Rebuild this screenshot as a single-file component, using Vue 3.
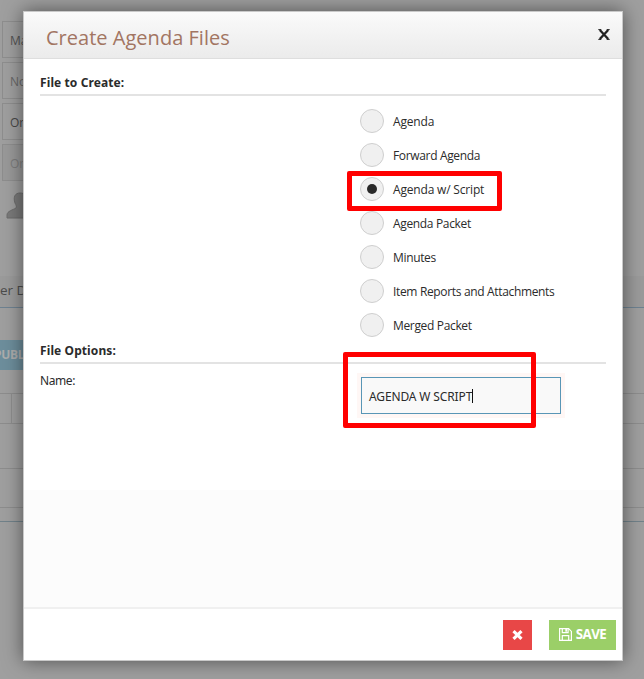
<script setup>
import { ref } from 'vue'

const fields = [
  { text: 'Ma', tone: '' },
  { text: 'No', tone: 'mid' },
  { text: 'Or', tone: 'dark' },
  { text: 'Or', tone: 'off' },
]
const files = [
  'Agenda',
  'Forward Agenda',
  'Agenda w/ Script',
  'Agenda Packet',
  'Minutes',
  'Item Reports and Attachments',
  'Merged Packet',
]
const selected = ref('Agenda w/ Script')
const name = ref('AGENDA W SCRIPT')
</script>

<template>
  <div class="screen">
    <div class="page">
      <div class="fields">
        <div v-for="(f, i) in fields" :key="i" class="field" :class="f.tone">{{ f.text }}</div>
      </div>
      <svg class="person" width="34" height="28" viewBox="0 0 34 28">
        <path d="M1 26v-3c0-4 6-5 9-7 1-1 0-3-1-5C7 5 9 1 14 1s8 3 7 9c0 3-2 5-1 6 3 2 10 3 10 7v3z" fill="#7a7a7a" stroke="#6c6c6c" />
      </svg>
      <div class="tabs">er D</div>
      <div class="actions"><span class="publish">PUBL</span></div>
      <div class="table">
        <div class="head"><span class="cell"></span></div>
        <div class="row"></div>
        <div class="row last"></div>
        <div class="end"></div>
      </div>
    </div>

    <section class="modal">
      <header class="top">
        <h1>Create Agenda Files</h1>
        <svg class="close" width="12" height="11" viewBox="0 0 12 11">
          <path d="M1.800 1l8.400 9M10.200 1L1.800 10" stroke="#222" stroke-width="2.300" />
          <path d="M.3.600h3M8.700.600h3M.3 10.400h3M8.700 10.400h3" stroke="#222" stroke-width="1" />
        </svg>
      </header>
      <div class="body">
        <h2 class="first">File to Create:</h2>
        <div class="choices">
          <div v-for="f in files" :key="f" class="choice" @click="selected = f">
            <span class="radio"><i v-if="selected === f"></i></span>
            <span class="label" :class="{ wide: f === selected || f === 'Agenda' }">{{ f }}</span>
            <span v-if="f === 'Agenda w/ Script'" class="mark mark-choice"></span>
          </div>
        </div>
        <h2 class="second">File Options:</h2>
        <div class="name-row">
          <span class="name-label">Name:</span>
          <div class="input"><span>{{ name }}</span><b class="caret"></b><span class="mark mark-input"></span></div>
        </div>
      </div>
      <div class="filler"></div>
      <footer class="bottom">
        <button class="cancel">
          <svg width="11" height="10" viewBox="0 0 11 10"><path d="M1.500 1.200l8 7.600M9.500 1.200l-8 7.600" stroke="#fff" stroke-width="3.200" /></svg>
        </button>
        <button class="save">
          <svg width="13" height="13" viewBox="0 0 13 13" fill="none" stroke="#fff" stroke-width="1.200">
            <path d="M.6.600h9l2.800 2.800v9H.6z" />
            <path d="M3.300.600v4h5.800v-4M3.300 12.400V7.600h6.400v4.800" />
            <path d="M7.200 1v2.700" stroke-width="1.800" />
          </svg>
          <span>SAVE</span>
        </button>
      </footer>
    </section>
  </div>
</template>

<style>
body { margin: 0; overflow: hidden; }
</style>

<style scoped>
* { box-sizing: border-box; }
.screen {
  position: relative;
  width: 644px;
  height: 679px;
  overflow: hidden;
  background: #9f9f9f;
  font-family: "Open Sans", "Noto Sans", sans-serif;
  color: #2b2b2b;
}
.page { height: 679px; padding-top: 21px; white-space: nowrap; }
.fields { display: flex; flex-direction: column; gap: 4px; padding-left: 2px; }
.field {
  width: 200px;
  height: 37px;
  padding-left: 7px;
  border: 1px solid #8e8e8e;
  font-size: 12px;
  line-height: 37px;
  color: #545454;
}
.field.mid { color: #686868; }
.field.dark { color: #484848; }
.field.off { color: #7d7d7d; background: #999; }
.person { display: block; margin: 11px 0 0 6px; }
.tabs {
  height: 32px;
  margin-top: 56px;
  background: #9b9b9b;
  border-bottom: 1px solid #6e8291;
  font-size: 13.500px;
  line-height: 29px;
  color: #4c4c4c;
}
.actions { height: 85px; padding-top: 32px; }
.publish {
  display: block;
  width: 80px;
  height: 30px;
  background: #6d8e9c;
  color: #adadad;
  font-size: 12px;
  font-weight: 700;
  line-height: 30px;
  text-indent: -6px;
  letter-spacing: -0.300px;
}
.head { display: flex; height: 31px; border: solid #8d8d8d; border-width: 1px 0; }
.cell { width: 12px; border-right: 1px solid #8d8d8d; }
.row { height: 45px; border-bottom: 1px solid #8d8d8d; }
.row.last { height: 39px; }
.end { height: 14px; border-bottom: 1px solid #71828a; }

.modal {
  position: absolute;
  left: 23px;
  top: 11px;
  width: 600px;
  height: 650px;
  display: flex;
  flex-direction: column;
  background: #fff;
  border: 1px solid #c9c9c9;
  box-shadow: 0 0 18px rgba(0, 0, 0, 0.5);
}
.top {
  display: flex;
  justify-content: space-between;
  height: 47px;
  padding: 0 12px 0 22px;
  background: linear-gradient(#fafafa, #ebebeb);
  border-bottom: 1px solid #dedede;
}
h1 {
  margin: 0;
  font-size: 20px;
  font-weight: 400;
  line-height: 51px;
  letter-spacing: 0.020px;
  color: #a27562;
}
.close { margin-top: 17px; }
.body { height: 431px; padding: 11px 16px 0; }
h2 {
  margin: 0;
  height: 26px;
  border-bottom: 2px solid #e3e3e3;
  font-family: "Noto Sans", sans-serif;
  font-size: 12px;
  font-weight: 700;
  line-height: 25px;
  letter-spacing: 0.100px;
}
.choices { display: flex; flex-direction: column; gap: 10px; padding: 13px 0 0 320px; }
.choice { position: relative; display: flex; height: 24px; }
.radio {
  display: flex;
  align-items: center;
  justify-content: center;
  width: 24px;
  height: 24px;
  border: 1px solid #cfcfcf;
  border-radius: 50%;
  background: #f0f0f0;
}
.radio i { width: 10px; height: 10px; border-radius: 50%; background: #292929; }
.label { margin-left: 9px; font-size: 12px; line-height: 26px; letter-spacing: -0.340px; white-space: nowrap; }
.label.wide { letter-spacing: -0.180px; }
.mark { position: absolute; border: 5px solid #f00; border-radius: 2px; }
.mark-choice { left: -13px; top: -6px; width: 155px; height: 40px; }
h2.second { margin-top: 1px; }
.name-row { display: flex; padding-top: 13px; }
.name-label { width: 321px; font-family: "Noto Sans", sans-serif; font-size: 12px; line-height: 7px; letter-spacing: -0.400px; }
.input {
  position: relative;
  display: flex;
  align-items: center;
  width: 200px;
  height: 37px;
  padding: 2px 7px 0;
  background: #f9f9f9;
  border: 1px solid #5996b6;
  box-shadow: 0 0 0 4px #fff7f5;
  font-family: "Noto Sans", sans-serif;
  font-size: 12px;
  letter-spacing: -0.130px;
  white-space: nowrap;
}
.caret { width: 1px; height: 14px; margin-top: -1px; background: #111; }
.mark-input { left: -19px; top: -26px; width: 193px; height: 76px; }
.filler { height: 117px; background: #fcfcfc; }
.bottom {
  display: flex;
  justify-content: flex-end;
  gap: 17px;
  height: 53px;
  padding: 11px 6px 0 0;
  border-top: 2px solid #f0f0f0;
}
button {
  display: flex;
  align-items: center;
  justify-content: center;
  height: 30px;
  padding: 0;
  border: 0;
  color: #fff;
}
.cancel { width: 29px; background: #e84747; }
.save {
  width: 67px;
  gap: 4px;
  background: #9bcf68;
  font-family: "Open Sans", sans-serif;
  font-size: 13.300px;
  font-weight: 700;
  letter-spacing: -0.550px;
}
.save svg { margin-top: -2px; }
.save span { margin-top: -2px; }
</style>
